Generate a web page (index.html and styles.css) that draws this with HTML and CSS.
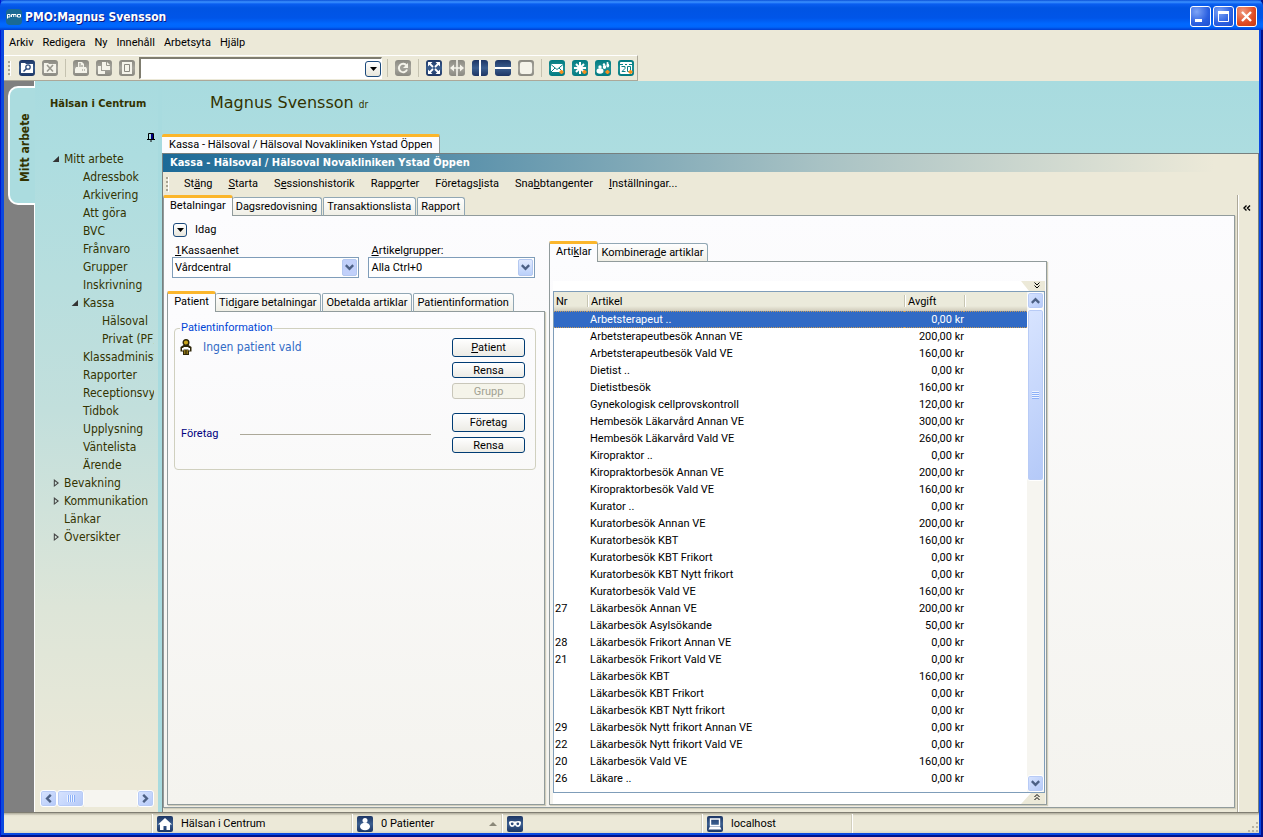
FILE: index.html
```html
<!DOCTYPE html>
<html lang="sv">
<head>
<meta charset="utf-8">
<title>PMO:Magnus Svensson</title>
<link rel="stylesheet" href="styles.css">
</head>
<body>
<svg class="defs" aria-hidden="true">
  <defs>
    <linearGradient id="navy" x1="0" y1="0" x2="0" y2="1"><stop offset="0" stop-color="#1c3564"/><stop offset=".5" stop-color="#3a5e8f"/><stop offset="1" stop-color="#1c3564"/></linearGradient>
    <linearGradient id="grey" x1="0" y1="0" x2="0" y2="1"><stop offset="0" stop-color="#8a8981"/><stop offset=".5" stop-color="#a5a49c"/><stop offset="1" stop-color="#8a8981"/></linearGradient>
    <linearGradient id="teal" x1="0" y1="0" x2="0" y2="1"><stop offset="0" stop-color="#007a80"/><stop offset=".5" stop-color="#1f9095"/><stop offset="1" stop-color="#007a80"/></linearGradient>
    <symbol id="down" viewBox="0 0 9 7"><path d="M0.8 1.2 4.5 4.9 8.2 1.2" fill="none" stroke="#4d6185" stroke-width="2.4"/></symbol>
    <symbol id="caret" viewBox="0 0 7 4"><path d="M0 0H7L3.5 4Z" fill="#000"/></symbol>
  </defs>
</svg>

<header class="titlebar">
  <svg class="app-icon" viewBox="0 0 16 16"><rect width="16" height="16" rx="4" fill="#1a6a94"/><path d="M1.5 9.500V5.500H4V8H1.500M5.500 8V5.500H10V8M7.700 5.500V8M11.500 5.500H14.500V8H11.500Z" fill="none" stroke="#fff"/></svg>
  <h1>PMO:Magnus Svensson</h1>
  <button class="winbtn" aria-label="Minimera"><svg viewBox="0 0 19 19"><rect x="4" y="12" width="7" height="3" fill="#fff"/></svg></button>
  <button class="winbtn" aria-label="Maximera"><svg viewBox="0 0 19 19"><path d="M4.500 5V14.500H14.500V5" fill="none" stroke="#fff"/><rect x="4" y="4" width="11" height="3" fill="#fff"/></svg></button>
  <button class="winbtn close" aria-label="Stäng fönster"><svg viewBox="0 0 19 19"><path d="M5 5 14 14M14 5 5 14" stroke="#fff" stroke-width="2.400"/></svg></button>
</header>

<div class="frame">
<nav class="menubar"><button>Arkiv</button><button>Redigera</button><button>Ny</button><button>Innehåll</button><button>Arbetsyta</button><button>Hjälp</button></nav>

<div class="toolbar">
  <span class="grip"></span>
  <button class="tool" aria-label="Sök"><svg viewBox="0 0 16 16"><rect width="16" height="16" rx="3" fill="url(#navy)"/><path d="M2 3H6L7 4H14V13H2Z" fill="#fff"/><circle cx="9" cy="7" r="2.200" fill="none" stroke="#2c4b7c" stroke-width="1.300"/><path d="M7.400 8.700 4.500 11.500" stroke="#2c4b7c" stroke-width="1.500"/></svg></button>
  <button class="tool" aria-label="Stäng patient"><svg viewBox="0 0 16 16"><rect width="16" height="16" rx="3" fill="url(#grey)"/><path d="M2 3H6L7 4H14V13H2Z" fill="#f4f3ea"/><path d="M5 5 11 11.500M11 5 5 11.500" stroke="#99988f" stroke-width="1.600"/></svg></button>
  <span class="sep"></span>
  <button class="tool" aria-label="Skriv ut"><svg viewBox="0 0 16 16"><rect width="16" height="16" rx="3" fill="url(#grey)"/><path d="M5 2H9L11 4V7H13L14 9V13H2V9L3 7H5Z" fill="#f4f3ea"/><path d="M6 4H8M6 6H10M9 10H10M11 10H12" stroke="#8a8981"/></svg></button>
  <button class="tool" aria-label="Kopiera"><svg viewBox="0 0 16 16"><rect width="16" height="16" rx="3" fill="url(#grey)"/><path d="M6 2H11L14 5V10H6Z" fill="#f4f3ea"/><path d="M2 6H5V11H9V14H2Z" fill="#f4f3ea"/><path d="M10.500 2V5.500H14" fill="none" stroke="#99988f"/></svg></button>
  <button class="tool" aria-label="Dokument"><svg viewBox="0 0 16 16"><rect width="16" height="16" rx="3" fill="url(#grey)"/><path d="M3 2H13V14H3Z" fill="#f4f3ea"/><path d="M5.500 4.500H10.500V11.500H5.500Z" fill="none" stroke="#8a8981"/></svg></button>
  <div class="combo"><input type="text" aria-label="Sökfält"><button class="drop" aria-label="Visa lista"><svg><use href="#caret"/></svg></button></div>
  <span class="sep first"></span>
  <button class="tool" aria-label="Uppdatera"><svg viewBox="0 0 16 16"><rect width="16" height="16" rx="3" fill="url(#grey)"/><path d="M11.500 5.500A4.200 4.200 0 1 0 12 9.500" fill="none" stroke="#f4f3ea" stroke-width="2"/><path d="M13 3V8H8Z" fill="#f4f3ea"/></svg></button>
  <span class="sep"></span>
  <button class="tool" aria-label="Expandera"><svg viewBox="0 0 16 16"><rect width="16" height="16" rx="3" fill="url(#navy)"/><path d="M2 2H6.500L2 6.500ZM14 2H9.500L14 6.500ZM2 14H6.500L2 9.500ZM14 14H9.500L14 9.500Z" fill="#fff"/><path d="M3 3 7 7M13 3 9 7M3 13 7 9M13 13 9 9" stroke="#fff" stroke-width="1.800"/></svg></button>
  <button class="tool" aria-label="Bredda"><svg viewBox="0 0 16 16"><rect width="16" height="16" rx="3" fill="url(#grey)"/><path d="M8 0V16M2 8H14" stroke="#f4f3ea" stroke-width="1.600"/><path d="M1 8 5 4.500V11.500ZM15 8 11 4.500V11.500Z" fill="#f4f3ea"/></svg></button>
  <button class="tool" aria-label="Dela lodrätt"><svg viewBox="0 0 16 16"><rect width="16" height="16" rx="3" fill="url(#navy)"/><path d="M8 0V16" stroke="#fff" stroke-width="2"/></svg></button>
  <button class="tool" aria-label="Dela vågrätt"><svg viewBox="0 0 16 16"><rect width="16" height="16" rx="3" fill="url(#navy)"/><path d="M0 8H16" stroke="#fff" stroke-width="2"/></svg></button>
  <button class="tool" aria-label="En ruta"><svg viewBox="0 0 16 16"><rect width="16" height="16" rx="3" fill="url(#grey)"/><rect x="2" y="2" width="12" height="12" rx="2" fill="#f4f3ea"/></svg></button>
  <span class="sep"></span>
  <button class="tool" aria-label="Nytt meddelande"><svg viewBox="0 0 16 16"><rect width="16" height="16" rx="3" fill="url(#teal)"/><path d="M2 4H14V12H2Z" fill="#fff"/><path d="M2 4.500 8 9.500 14 4.500M2 12 6 8M14 12 10 8" fill="none" stroke="#0a8187"/><path d="M12.500 10V14M10.500 12H14.500" stroke="#f5901e" stroke-width="2"/></svg></button>
  <button class="tool" aria-label="Ny bevakning"><svg viewBox="0 0 16 16"><rect width="16" height="16" rx="3" fill="url(#teal)"/><path d="M8 2V14M2 8H14M4 4 12 12M12 4 4 12" stroke="#fff" stroke-width="2"/><path d="M12.500 10V14M10.500 12H14.500" stroke="#f5901e" stroke-width="2"/></svg></button>
  <button class="tool" aria-label="Ny grupp"><svg viewBox="0 0 16 16"><rect width="16" height="16" rx="3" fill="url(#teal)"/><circle cx="5" cy="7" r="1.700" fill="#fff"/><ellipse cx="5" cy="11" rx="3.500" ry="2.800" fill="#fff"/><circle cx="9" cy="4.500" r="1.200" fill="#fff"/><ellipse cx="9.500" cy="7" rx="1.700" ry="2" fill="#fff"/><circle cx="12.500" cy="3" r="1" fill="#fff"/><ellipse cx="12.800" cy="5.500" rx="1.400" ry="2" fill="#fff"/><path d="M12.500 10V14M10.500 12H14.500" stroke="#f5901e" stroke-width="2"/></svg></button>
  <button class="tool" aria-label="Ny bokning"><svg viewBox="0 0 16 16"><rect width="16" height="16" rx="3" fill="url(#teal)"/><rect x="2" y="2" width="12" height="12" rx="1" fill="#fff"/><path d="M2 4.500H5M7 4.500H9M11 4.500H14M3.500 6.500H7V8.500L4 11.500H7.500M9.500 6.500H12.500V11.500H9.500Z" fill="none" stroke="#0a8187"/><path d="M12.500 10V14M10.500 12H14.500" stroke="#f5901e" stroke-width="2"/></svg></button>
</div>

<div class="workspace">
  <aside class="rail"><button class="railtab">Mitt arbete</button></aside>

  <aside class="side">
    <h2>Hälsan i Centrum</h2>
    <div class="pinrow"><button aria-label="Fäst"><svg viewBox="0 0 8 9"><path d="M1.500 6V.500H6.500V6M0 6.500H8M4 7V9" fill="none" stroke="#000"/><rect x="4" y="1" width="2" height="5" fill="#000080"/></svg></button></div>
    <ul class="tree">
      <li class="l1 open"><a href="#">Mitt arbete</a></li>
      <li class="l2"><a href="#">Adressbok</a></li>
      <li class="l2"><a href="#">Arkivering</a></li>
      <li class="l2"><a href="#">Att göra</a></li>
      <li class="l2"><a href="#">BVC</a></li>
      <li class="l2"><a href="#">Frånvaro</a></li>
      <li class="l2"><a href="#">Grupper</a></li>
      <li class="l2"><a href="#">Inskrivning</a></li>
      <li class="l2 open"><a href="#">Kassa</a></li>
      <li class="l3"><a href="#">Hälsoval</a></li>
      <li class="l3"><a href="#">Privat (PF)</a></li>
      <li class="l2"><a href="#">Klassadministration</a></li>
      <li class="l2"><a href="#">Rapporter</a></li>
      <li class="l2"><a href="#">Receptionsvy</a></li>
      <li class="l2"><a href="#">Tidbok</a></li>
      <li class="l2"><a href="#">Upplysning</a></li>
      <li class="l2"><a href="#">Väntelista</a></li>
      <li class="l2"><a href="#">Ärende</a></li>
      <li class="l1 shut"><a href="#">Bevakning</a></li>
      <li class="l1 shut"><a href="#">Kommunikation</a></li>
      <li class="l1"><a href="#">Länkar</a></li>
      <li class="l1 shut"><a href="#">Översikter</a></li>
    </ul>
    <div class="hscroll">
      <button class="sb" aria-label="Vänster"><svg class="rot-l"><use href="#down"/></svg></button>
      <span class="thumb"></span>
      <span class="track"></span>
      <button class="sb" aria-label="Höger"><svg class="rot-r"><use href="#down"/></svg></button>
    </div>
  </aside>

  <main class="main">
    <div class="user"><h2>Magnus Svensson <small>dr</small></h2></div>
    <div class="doctabs"><button>Kassa - Hälsoval / Hälsoval Novakliniken Ystad Öppen</button></div>
    <section class="doc">
      <h3>Kassa - Hälsoval / Hälsoval Novakliniken Ystad Öppen</h3>
      <nav class="docmenu"><span class="grip"></span><button>St<u>ä</u>ng</button><button><u>S</u>tarta</button><button>S<u>e</u>ssionshistorik</button><button>Rapp<u>o</u>rter</button><button>Företags<u>l</u>ista</button><button>Sna<u>b</u>btangenter</button><button><u>I</u>nställningar...</button></nav>
      <div class="docbody">
        <div class="view">
          <div class="tabs"><button class="tab on">Betalningar</button><button class="tab">Dagsredovisning</button><button class="tab">Transaktionslista</button><button class="tab">Rapport</button></div>
          <div class="panel outer">
            <div class="left">
              <div class="today"><button class="drop small" aria-label="Välj dag"><svg><use href="#caret"/></svg></button><span>Idag</span></div>
              <div class="fields">
                <div class="field unit"><label for="unit"><u>1</u>Kassaenhet</label><div class="sel"><select id="unit"><option>Vårdcentral</option></select><span class="arrow dim"><svg><use href="#down"/></svg></span></div></div>
                <div class="field group"><label for="grp"><u>A</u>rtikelgrupper:</label><div class="sel"><select id="grp"><option>Alla Ctrl+0</option></select><span class="arrow"><svg><use href="#down"/></svg></span></div></div>
              </div>
              <div class="tabs"><button class="tab on patient">Patient</button><button class="tab">Tid<u>i</u>gare betalningar</button><button class="tab">Obetalda artiklar</button><button class="tab">Patientinformation</button></div>
              <div class="panel patientpanel">
                <fieldset>
                  <legend>Patientinformation</legend>
                  <div class="info">
                    <p class="none"><svg viewBox="0 0 12 16"><circle cx="6" cy="3.500" r="2.800" fill="#c9a51b" stroke="#2e2608" stroke-width="1.400"/><path d="M3.500 6H8.500L11.500 8V12.500H9V16H3V12.500H.500V8Z" fill="#2e2608"/><path d="M2 9H3.500V8H8.500V9H10V11.500H8.500V10.500H3.500V11.500H2Z" fill="#fff"/><path d="M4.800 11V15M7.200 11V15" stroke="#b5951f"/></svg>Ingen patient vald</p>
                    <p class="company"><span>Företag</span><i></i></p>
                  </div>
                  <div class="btns">
                    <button class="btn big"><u>P</u>atient</button>
                    <button class="btn">Rensa</button>
                    <button class="btn" disabled>Grupp</button>
                    <button class="btn big gap">Företag</button>
                    <button class="btn">Rensa</button>
                  </div>
                </fieldset>
              </div>
            </div>
            <div class="right">
              <div class="tabs"><button class="tab on">Arti<u>k</u>lar</button><button class="tab">Kombinera<u>d</u>e artiklar</button></div>
              <div class="panel articles">
                <div class="strip top"><button aria-label="Visa mer"><svg viewBox="0 0 16 9"><path d="M5.500 1.500 8 4 10.500 1.500M5.500 4.500 8 7 10.500 4.500" fill="none" stroke="#000"/></svg></button></div>
                <div class="list">
                  <div class="rows">
                  <table>
                    <thead><tr><th class="nr">Nr</th><th class="name">Artikel</th><th class="fee">Avgift</th><th></th></tr></thead>
                    <tbody>
<tr class="selected"><td></td><td>Arbetsterapeut ..</td><td>0,00 kr</td><td></td></tr>
<tr><td></td><td>Arbetsterapeutbesök Annan VE</td><td>200,00 kr</td><td></td></tr>
<tr><td></td><td>Arbetsterapeutbesök Vald VE</td><td>160,00 kr</td><td></td></tr>
<tr><td></td><td>Dietist ..</td><td>0,00 kr</td><td></td></tr>
<tr><td></td><td>Dietistbesök</td><td>160,00 kr</td><td></td></tr>
<tr><td></td><td>Gynekologisk cellprovskontroll</td><td>120,00 kr</td><td></td></tr>
<tr><td></td><td>Hembesök Läkarvård Annan VE</td><td>300,00 kr</td><td></td></tr>
<tr><td></td><td>Hembesök Läkarvård Vald VE</td><td>260,00 kr</td><td></td></tr>
<tr><td></td><td>Kiropraktor ..</td><td>0,00 kr</td><td></td></tr>
<tr><td></td><td>Kiropraktorbesök Annan VE</td><td>200,00 kr</td><td></td></tr>
<tr><td></td><td>Kiropraktorbesök Vald VE</td><td>160,00 kr</td><td></td></tr>
<tr><td></td><td>Kurator ..</td><td>0,00 kr</td><td></td></tr>
<tr><td></td><td>Kuratorbesök Annan VE</td><td>200,00 kr</td><td></td></tr>
<tr><td></td><td>Kuratorbesök KBT</td><td>160,00 kr</td><td></td></tr>
<tr><td></td><td>Kuratorbesök KBT Frikort</td><td>0,00 kr</td><td></td></tr>
<tr><td></td><td>Kuratorbesök KBT Nytt frikort</td><td>0,00 kr</td><td></td></tr>
<tr><td></td><td>Kuratorbesök Vald VE</td><td>160,00 kr</td><td></td></tr>
<tr><td>27</td><td>Läkarbesök Annan VE</td><td>200,00 kr</td><td></td></tr>
<tr><td></td><td>Läkarbesök Asylsökande</td><td>50,00 kr</td><td></td></tr>
<tr><td>28</td><td>Läkarbesök Frikort Annan VE</td><td>0,00 kr</td><td></td></tr>
<tr><td>21</td><td>Läkarbesök Frikort Vald VE</td><td>0,00 kr</td><td></td></tr>
<tr><td></td><td>Läkarbesök KBT</td><td>160,00 kr</td><td></td></tr>
<tr><td></td><td>Läkarbesök KBT Frikort</td><td>0,00 kr</td><td></td></tr>
<tr><td></td><td>Läkarbesök KBT Nytt frikort</td><td>0,00 kr</td><td></td></tr>
<tr><td>29</td><td>Läkarbesök Nytt frikort Annan VE</td><td>0,00 kr</td><td></td></tr>
<tr><td>22</td><td>Läkarbesök Nytt frikort Vald VE</td><td>0,00 kr</td><td></td></tr>
<tr><td>20</td><td>Läkarbesök Vald VE</td><td>160,00 kr</td><td></td></tr>
<tr><td>26</td><td>Läkare ..</td><td>0,00 kr</td><td></td></tr>
                    </tbody>
                  </table>
                  </div>
                  <div class="vscroll">
                    <button class="sb" aria-label="Upp"><svg class="rot-u"><use href="#down"/></svg></button>
                    <span class="thumb"></span>
                    <span class="track"></span>
                    <button class="sb" aria-label="Ned"><svg><use href="#down"/></svg></button>
                  </div>
                </div>
                <div class="strip bottom"><button aria-label="Visa mindre"><svg viewBox="0 0 16 9"><path d="M5.500 4 8 1.500 10.500 4M5.500 7 8 4.500 10.500 7" fill="none" stroke="#000"/></svg></button></div>
              </div>
            </div>
          </div>
        </div>
        <div class="collapse"><button aria-label="Fäll ut"><svg viewBox="0 0 8 6"><path d="M3.500 .500 1 3 3.500 5.500M7 .500 4.500 3 7 5.500" fill="none" stroke="#000" stroke-width="1.400"/></svg></button></div>
      </div>
    </section>
  </main>
</div>

<footer class="statusbar">
  <span></span>
  <span><svg viewBox="0 0 16 16"><rect width="16" height="16" rx="2" fill="url(#navy)"/><path d="M8 2 15 8.500H13V14H9.500V10H6.500V14H3V8.500H1Z" fill="#fff"/></svg>Hälsan i Centrum</span>
  <span><svg viewBox="0 0 16 16"><rect width="16" height="16" rx="2" fill="url(#navy)"/><circle cx="8" cy="4.500" r="2.500" fill="#fff"/><ellipse cx="8" cy="10.500" rx="5" ry="3.800" fill="#fff"/></svg>0 Patienter<svg class="up" viewBox="0 0 8 4"><path d="M0 4H8L4 0Z" fill="#8a8878"/></svg></span>
  <span><svg viewBox="0 0 16 16"><rect width="16" height="16" rx="2" fill="url(#navy)"/><path d="M2 6Q3 4.500 8 5.500 13 4.500 14 6 14 10.500 11 11 9 11 8 9 7 11 5 11 2 10.500 2 6Z" fill="#fff"/><circle cx="5.200" cy="7.800" r="1.400" fill="#2c4b7c"/><circle cx="10.800" cy="7.800" r="1.400" fill="#2c4b7c"/></svg></span>
  <span><svg viewBox="0 0 16 16"><rect width="16" height="16" rx="2" fill="url(#navy)"/><path d="M3.500 3H12.500V9.500H3.500Z" fill="none" stroke="#fff" stroke-width="1.400"/><path d="M3 10.500H13L14.500 13.500H1.500Z" fill="#fff"/></svg>localhost</span>
  <span><svg class="size" viewBox="0 0 11 11"><path d="M8 0H10V2H8ZM4 4H6V6H4ZM8 4H10V6H8ZM0 8H2V10H0ZM4 8H6V10H4ZM8 8H10V10H8Z" fill="#b8b4a2"/></svg></span>
</footer>
</div>
</body>
</html>
```
FILE: styles.css
```css
:root {
  --face: #ece9d8;
  --line: #919b9c;
  --ui: Roboto, "Liberation Sans", sans-serif;
  --head: "DejaVu Sans Condensed", "DejaVu Sans", sans-serif;
}
* { box-sizing: border-box; }
body {
  margin: 0;
  height: 100vh;
  display: flex;
  flex-direction: column;
  background: #0a48e0;
  box-shadow: inset 1px 0 #0019cf, inset -2px -2px #00138c;
  font: 11px/14px var(--ui);
  color: #000;
  overflow: hidden;
}
button, input, select { font: inherit; color: inherit; margin: 0; padding: 0; border: 0; background: none; border-radius: 0; white-space: nowrap; }
h1, h2, h3, p, ul { margin: 0; padding: 0; }
svg { display: block; flex: none; }
.defs { position: absolute; width: 0; height: 0; }

.titlebar {
  height: 30px;
  flex: none;
  display: flex;
  align-items: center;
  gap: 2px;
  padding: 3px 6px 0 6px;
  border-radius: 6px 6px 0 0;
  background: linear-gradient(#0a50d8 0, #3c92ff 2px, #0a5ef0 4px, #0054e3 8px, #0055e8 18px, #0068ff 24px, #0066fb 27px, #003dd0 30px);
}
.app-icon { width: 16px; height: 16px; margin-right: 1px; }
.titlebar h1 { flex: 1; font: bold 12px/16px var(--head); color: #fff; text-shadow: 1px 1px 0 #0a1883; }
.winbtn { width: 21px; height: 21px; border: 1px solid #fff; border-radius: 3px; background: radial-gradient(circle at 30% 25%, #7ea4f6, #2a5fe0 60%, #1c4fd0); }
.winbtn.close { background: radial-gradient(circle at 30% 25%, #f09a80, #de4a22 60%, #c43a12); }

.frame { flex: 1; min-height: 0; display: flex; flex-direction: column; margin: 0 4px 4px; background: var(--face); }

.menubar { height: 25px; flex: none; display: flex; align-items: center; gap: 9px; padding: 1px 0 0 5px; }
.toolbar {
  height: 26px;
  flex: none;
  align-self: flex-start;
  display: flex;
  align-items: center;
  padding: 0 3px 0 4px;
  border-top: 1px solid #fff;
  border-right: 1px solid #aca899;
  border-bottom: 1px solid #aca899;
}
.grip { width: 3px; height: 15px; flex: none; background: repeating-linear-gradient(#a9a593 0 2px, transparent 2px 4px); border-right: 1px solid #fff; }
.toolbar .grip { margin-right: 1px; }
.tool { width: 16px; height: 16px; margin-left: 7px; }
.tool svg { width: 16px; height: 16px; }
.sep { width: 1px; height: 18px; margin-left: 7px; background: #c5c2b0; }
.sep.first { margin-left: 5px; }
.combo { width: 243px; height: 22px; margin-left: 4px; display: flex; align-items: center; background: #fff; border: 1px solid #fff; border-top: 2px solid #7f7d70; border-left: 2px solid #7f7d70; }
.combo input { flex: 1; min-width: 0; height: 18px; padding: 0 3px; outline: 0; }
.drop { width: 16px; height: 16px; display: grid; place-items: center; border: 1px solid #1c4a7c; border-radius: 3px; background: linear-gradient(#fff, #e8e6dc); }
.drop svg { width: 7px; height: 4px; }
.drop.small { width: 14px; height: 14px; }

.workspace { flex: 1; min-height: 0; display: flex; background: linear-gradient(#a8dbdf 0, #addde0 10%, #c2dfdc 45%, #dde5d8 72%, #ece9d8 96%); }
.rail { width: 31px; flex: none; background: #808080; border-right: 1px solid #fff; padding: 5px 0 0 4px; }
.railtab {
  width: 27px;
  height: 119px;
  writing-mode: vertical-rl;
  transform: rotate(180deg);
  text-align: center;
  font: bold 12px/26px var(--head);
  padding: 0 2px 5px 0;
  color: #333300;
  background: #abdcdf;
  border: 2px solid #fff;
  border-left: 0;
  border-radius: 0 10px 10px 0;
}
.side { width: 127px; flex: none; display: flex; flex-direction: column; border-right: 4px solid #a8dbdf; color: #333300; }
.side h2 { font: bold 11px/18px var(--head); padding: 14px 0 0 15px; white-space: nowrap; }
.pinrow { height: 37px; display: flex; justify-content: flex-end; padding: 20px 3px 0 0; }
.pinrow button { height: 9px; }
.pinrow svg { width: 8px; height: 9px; }
.tree { list-style: none; flex: 1; min-height: 0; overflow: hidden; margin-right: 4px; font: 12px/18px var(--head); }
.tree li { display: flex; align-items: center; height: 18px; padding-left: 16px; white-space: nowrap; }
.tree a { color: inherit; text-decoration: none; }
.tree li::before { content: ""; width: 8px; height: 6px; flex: none; margin-right: 5px; }
.tree .l2 { padding-left: 35px; }
.tree .l3 { padding-left: 54px; }
.tree .open::before { background: #333; clip-path: polygon(100% 0, 100% 100%, 20% 100%); }
.tree .shut::before { height: 8px; background: #444; clip-path: polygon(35% 0, 100% 50%, 35% 100%, 35% 22%, 48% 26%, 48% 74%, 78% 50%, 35% 18%); }
.hscroll { display: flex; height: 17px; margin: 0 4px 5px 5px; }
.sb, .thumb { border: 1px solid #fff; border-radius: 3px; background: linear-gradient(135deg, #d8e4ff, #b4c9f8); box-shadow: inset 0 0 0 1px #b8cbf6; }
.sb { width: 17px; height: 17px; flex: none; display: grid; place-items: center; }
.sb svg, .arrow svg { width: 9px; height: 7px; }
.rot-l { transform: rotate(90deg); }
.rot-r { transform: rotate(-90deg); }
.rot-u { transform: rotate(180deg); }
.track { flex: 1; background: #f6f5f0; }
.thumb { display: grid; place-items: center; }
.hscroll .thumb { width: 27px; }
.hscroll .thumb::after { content: ""; width: 8px; height: 7px; background: repeating-linear-gradient(90deg, #eef4ff 0 1px, #8cb0f8 1px 2px); }

.main { flex: 1; min-width: 0; display: flex; flex-direction: column; }
.user { height: 53px; flex: none; padding: 11px 0 0 48px; }
.user h2 { font: 16px/22px "DejaVu Sans", sans-serif; color: #333300; }
.user small { font: 10px/14px var(--head); }
.doctabs { height: 19px; flex: none; display: flex; }
.doctabs button { height: 19px; padding: 0 7px; background: #fcfcfe; border-top: 3px solid #fbb62c; border-right: 1px solid var(--line); border-radius: 2px 2px 0 0; }
.doc { flex: 1; min-height: 0; display: flex; flex-direction: column; border-top: 1px solid #77807f; border-left: 1px solid #77807f; border-right: 1px solid #77807f; background: var(--face); }
.doc h3 { height: 18px; flex: none; padding-left: 7px; font: bold 11px/18px var(--head); color: #fff; background: linear-gradient(90deg, #1c6a97, #a8c2c4 60%, var(--face) 96%); }
.docmenu { height: 23px; flex: none; display: flex; align-items: center; gap: 16px; padding: 1px 0 0 3px; }
.docmenu .grip { margin-right: -1px; }
.docbody { flex: 1; min-height: 0; display: flex; }
.view { flex: 1; min-width: 0; display: flex; flex-direction: column; padding: 0 2px 4px 0; }
.collapse { width: 21px; flex: none; border-left: 1px solid #aca899; box-shadow: inset 1px 0 #fff; padding: 6px 0 0 5px; }
.collapse svg { width: 8px; height: 6px; }

.tabs { height: 21px; flex: none; display: flex; align-items: flex-end; position: relative; z-index: 1; }
.tab { height: 19px; padding: 1px 4px 0 3px; margin-right: 1px; border: 1px solid #91a7b4; border-bottom-color: var(--line); border-radius: 2px 3px 0 0; background: linear-gradient(#fefefe, #f0efe6); }
.tab.on { height: 21px; margin: 0; padding: 0 6px 2px 6px; border-top: 3px solid #fbb62c; border-bottom: 0; background: #fcfcfe; border-left-color: var(--line); border-right-color: var(--line); }
.tab.on + .tab { border-left: 0; }
.panel { margin-top: -1px; border: 1px solid var(--line); box-shadow: 1px 1px 1px #d2cfbd; background: linear-gradient(#fcfcfe, #f4f3ee); }
.outer { flex: 1; min-height: 0; display: flex; gap: 4px; padding: 6px 3px 2px; }
.left { width: 378px; display: flex; flex-direction: column; }
.right { width: 498px; display: flex; flex-direction: column; padding-top: 19px; }
.today { display: flex; align-items: center; gap: 8px; height: 16px; margin: 0 0 6px 6px; }
.fields { display: flex; gap: 9px; margin: 0 10px 13px 5px; }
.field { display: flex; flex-direction: column; }
.unit { flex: 188; }
.group { flex: 167; }
.field label { height: 13px; line-height: 13px; padding-left: 3px; }
.sel { height: 21px; display: flex; border: 1px solid #7f9db9; background: #fff; padding: 1px; }
.sel select { flex: 1; min-width: 0; appearance: none; padding-left: 1px; outline: 0; }
.arrow { width: 15px; display: grid; place-items: center; border: 1px solid #b4c8f0; border-radius: 2px; background: linear-gradient(#e2ebff, #bad0fa); }
.arrow.dim { background: #c1d0fa; }
.patient { width: 49px; }
.patientpanel { flex: 1; padding: 9px 8px 0 6px; }
fieldset { margin: 0; padding: 0 10px 16px 5px; border: 1px solid #d0d0bf; border-radius: 4px; display: flex; min-width: 0; }
legend { padding: 0 1px; color: #0046d5; line-height: 14px; }
.info { flex: 1; display: flex; flex-direction: column; justify-content: space-between; }
.none { display: flex; gap: 11px; font: 12px/18px var(--head); margin-top: 3px; color: #316ac5; }
.none svg { width: 12px; height: 16px; margin-top: 1px; }
.company { display: flex; align-items: center; margin-bottom: 12px; color: #000080; }
.company span { width: 60px; padding-left: 1px; }
.company i { flex: 1; margin-right: 21px; border-top: 1px solid #aca899; }
.btns { width: 73px; display: flex; flex-direction: column; gap: 5px; padding-top: 3px; }
.btn { height: 16px; border: 1px solid #003c74; border-radius: 3px; background: linear-gradient(#fff, #ecebe5); line-height: 15px; }
.btn.big { height: 19px; line-height: 18px; }
.btn.gap { margin-top: 9px; }
.btn:disabled { color: #a1a192; border-color: #c9c7ba; background: #f5f4ea; }

.articles { flex: 1; min-height: 0; display: flex; flex-direction: column; padding: 19px 1px 0 3px; }
.strip { height: 11px; flex: none; display: flex; justify-content: flex-end; background: #fff; }
.strip.top { height: 10px; }
.strip button { width: 24px; display: flex; justify-content: flex-end; background: var(--face); clip-path: polygon(0 0, 100% 0, 100% 100%, 8px 100%); }
.strip.bottom button { clip-path: polygon(10px 0, 100% 0, 100% 100%, 0 100%); }
.strip svg { width: 16px; height: 9px; }
.list { flex: 1; min-height: 0; display: flex; border: 1px solid #7f9db9; background: #fff; }
.rows { flex: 1; min-width: 0; overflow: hidden; }
table { width: 100%; border-collapse: separate; border-spacing: 0; table-layout: fixed; }
th { height: 19px; padding: 1px 2px 0; text-align: left; font-weight: normal; background: linear-gradient(#ebeadb 0 14px, #d6d2c2 18px, #cbc7b8); }
th + th { background: linear-gradient(90deg, #c7c5b2 0 1px, #fff 1px 2px, transparent 2px) 0 3px / 100% 12px no-repeat, linear-gradient(#ebeadb 0 14px, #d6d2c2 18px, #cbc7b8); padding-left: 4px; }
.nr { width: 33px; }
.fee { width: 60px; }
.name { width: 317px; }
td { height: 17px; padding: 1px 2px 0 3px; line-height: 16px; white-space: nowrap; }
td:first-child { padding-left: 1px; }
td:nth-child(3) { text-align: right; padding-left: 0; padding-right: 0; }
.selected td { background: #316ac5; color: #fff; border-top: 1px dotted #c59a5a; border-bottom: 1px dotted #c59a5a; line-height: 14px; }
.vscroll { width: 17px; flex: none; display: flex; flex-direction: column; background: #f6f5f0; }
.vscroll .thumb { height: 172px; }
.vscroll .thumb::after { content: ""; width: 7px; height: 8px; background: repeating-linear-gradient(#eef4ff 0 1px, #8cb0f8 1px 2px); }

.statusbar { height: 21px; flex: none; display: grid; grid-template-columns: 149px 200px 150px 200px 150px 1fr; padding-top: 2px; background: linear-gradient(#7f7d72 0 1px, #b9b6a6 1px 2px, #e4e1d0 3px, var(--face) 5px 18px, #dad6c4); }
.statusbar span { display: flex; align-items: center; gap: 8px; padding-left: 4px; box-shadow: inset -1px 0 #fff, inset -2px 0 #d2cfbd; }
.statusbar span:last-child { box-shadow: none; justify-content: flex-end; align-items: flex-end; }
.statusbar svg { width: 16px; height: 16px; }
.statusbar .up { width: 8px; height: 4px; margin: 0 6px 0 auto; }
.statusbar .size { width: 11px; height: 11px; }
```
